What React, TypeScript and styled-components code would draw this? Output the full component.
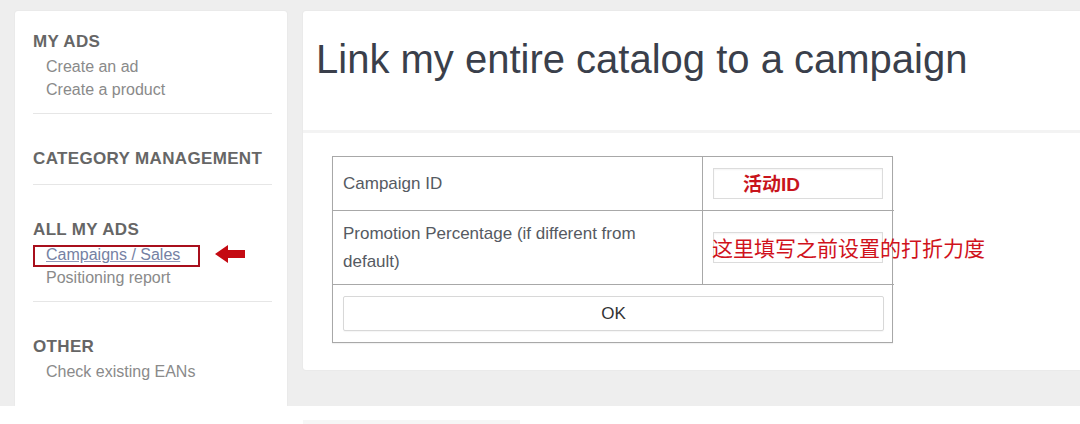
import React from "react";
import styled, { createGlobalStyle } from "styled-components";

const Global = createGlobalStyle`
  html, body { margin: 0; padding: 0; background: #ffffff; }
  body { font-family: "Liberation Sans", Arial, sans-serif; }
  * { box-sizing: border-box; }
`;

const Root = styled.div`
  width: 1080px;
  height: 424px;
  overflow: hidden;
  background: #ffffff;
`;

const Stage = styled.div`
  height: 406px;
  background: #eeeeee;
  display: flex;
  align-items: flex-start;
  gap: 16px;
  padding: 11px 0 0 15px;
  overflow: hidden;
`;

const Sidebar = styled.nav`
  width: 272px;
  align-self: stretch;
  background: #ffffff;
  border-radius: 3px 3px 0 0;
  box-shadow: 0 0 2px rgba(0, 0, 0, 0.07);
  padding: 0 15px 0 18px;
`;

const Section = styled.div<{ $first?: boolean; $last?: boolean }>`
  padding: ${(p) => (p.$first ? "19px" : "33px")} 0 12px;
  border-bottom: ${(p) => (p.$last ? "none" : "1px solid #e6e6e6")};
`;

const Heading = styled.div`
  font-size: 17px;
  line-height: 23px;
  font-weight: 700;
  color: #666666;
  letter-spacing: 0.35px;
  margin-bottom: 2px;
`;

const Item = styled.div`
  position: relative;
  font-size: 16px;
  line-height: 23px;
  color: #8a8a8a;
  padding-left: 13px;
`;

const LinkText = styled.span`
  color: #7581a3;
  text-decoration: underline;
  text-decoration-color: #8e98b8;
`;

const HighlightBox = styled.span`
  position: absolute;
  left: 0;
  top: 2px;
  width: 167px;
  height: 22px;
  border: 2.5px solid #a80f1c;
`;

const Arrow = styled.svg`
  position: absolute;
  left: 182px;
  top: 2px;
`;

const Main = styled.main`
  flex: 1;
  height: 359px;
  background: #ffffff;
  border-radius: 3px 0 0 3px;
  box-shadow: 0 0 2px rgba(0, 0, 0, 0.07);
`;

const Header = styled.header`
  height: 122px;
  padding: 26px 0 0 13px;
  border-bottom: 3px solid #f3f3f3;
`;

const Title = styled.h1`
  margin: 0;
  font-size: 40px;
  line-height: 44px;
  font-weight: 400;
  color: #3a3f4b;
`;

const Body = styled.div`
  padding: 23px 0 0 29px;
`;

const FormGrid = styled.div`
  width: 561px;
  display: grid;
  grid-template-columns: 370px 191px;
  grid-template-rows: 54px 74px 57px;
  border: 1px solid #a8a8a8;
  box-shadow: 0 1px 1px rgba(0, 0, 0, 0.05);
`;

const Cell = styled.div<{ $right?: boolean; $full?: boolean; $last?: boolean }>`
  position: relative;
  display: flex;
  align-items: center;
  padding: ${(p) => (p.$full ? "10px" : "0 10px")};
  grid-column: ${(p) => (p.$full ? "1 / 3" : "auto")};
  border-right: ${(p) => (p.$right || p.$full ? "none" : "1px solid #a8a8a8")};
  border-bottom: ${(p) => (p.$last ? "none" : "1px solid #a8a8a8")};
`;

const Label = styled.div`
  font-size: 17px;
  line-height: 28px;
  color: #555a62;
`;

const Input = styled.div`
  width: 170px;
  height: 31px;
  border: 1px solid #dcdcdc;
  box-shadow: inset 0 1px 2px rgba(0, 0, 0, 0.05);
  background: #ffffff;
  display: flex;
  align-items: center;
  padding-left: 29px;
`;

const InputNote = styled.span`
  font-family: "Noto Sans CJK SC", "Liberation Sans", sans-serif;
  font-size: 19px;
  font-weight: 700;
  color: #c8141c;
  line-height: 1;
  b {
    font-family: "Liberation Sans", Arial, sans-serif;
    font-weight: 700;
  }
`;

const Annotation = styled.span`
  position: absolute;
  left: 9px;
  top: 50%;
  transform: translateY(-54%);
  white-space: nowrap;
  font-family: "Noto Sans CJK SC", "Liberation Sans", sans-serif;
  font-size: 21px;
  line-height: 1;
  color: #d0121c;
`;

const Button = styled.button`
  width: 100%;
  height: 35px;
  border: 1px solid #d8d8d8;
  border-radius: 2px;
  background: #ffffff;
  font-family: "Liberation Sans", Arial, sans-serif;
  font-size: 17px;
  color: #333333;
  box-shadow: 0 1px 1px rgba(0, 0, 0, 0.04);
`;

const BottomStrip = styled.div`
  height: 18px;
  padding: 14px 0 0 303px;
`;

const FaintBar = styled.div`
  width: 217px;
  height: 4px;
  background: #f6f6f6;
`;

export default function App() {
  return (
    <Root>
      <Global />
      <Stage>
        <Sidebar>
          <Section $first>
            <Heading>MY ADS</Heading>
            <Item>Create an ad</Item>
            <Item>Create a product</Item>
          </Section>
          <Section>
            <Heading>CATEGORY MANAGEMENT</Heading>
          </Section>
          <Section>
            <Heading>ALL MY ADS</Heading>
            <Item>
              <LinkText>Campaigns / Sales</LinkText>
              <HighlightBox />
              <Arrow width="30" height="18" viewBox="0 0 30 18">
                <polygon points="0,9 13,0 13,5 30,5 30,13 13,13 13,18" fill="#c40a12" />
              </Arrow>
            </Item>
            <Item>Positioning report</Item>
          </Section>
          <Section $last>
            <Heading>OTHER</Heading>
            <Item>Check existing EANs</Item>
          </Section>
        </Sidebar>
        <Main>
          <Header>
            <Title>Link my entire catalog to a campaign</Title>
          </Header>
          <Body>
            <FormGrid>
              <Cell>
                <Label>Campaign ID</Label>
              </Cell>
              <Cell $right>
                <Input>
                  <InputNote>
                    活动<b>ID</b>
                  </InputNote>
                </Input>
              </Cell>
              <Cell>
                <Label>Promotion Percentage (if different from default)</Label>
              </Cell>
              <Cell $right>
                <Input />
                <Annotation>这里填写之前设置的打折力度</Annotation>
              </Cell>
              <Cell $full $last>
                <Button>OK</Button>
              </Cell>
            </FormGrid>
          </Body>
        </Main>
      </Stage>
      <BottomStrip>
        <FaintBar />
      </BottomStrip>
    </Root>
  );
}
